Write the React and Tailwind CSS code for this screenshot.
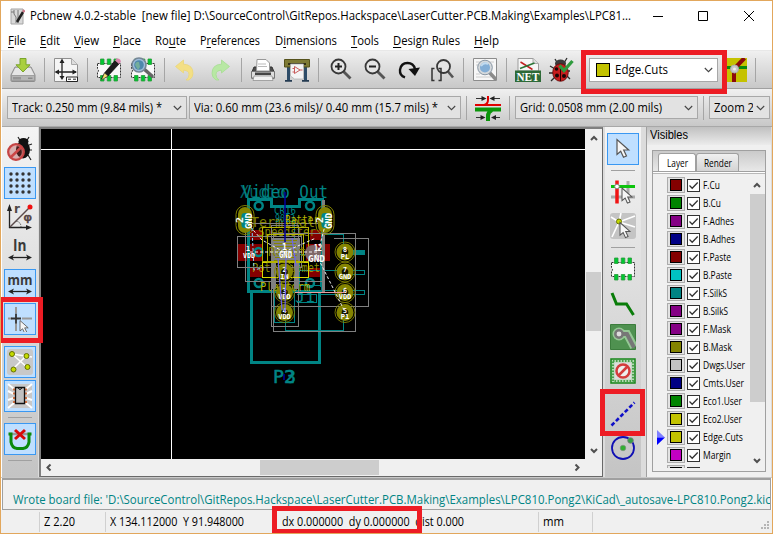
import { useLayoutEffect, useRef, useState } from "react";

/* Text squeezed or stretched horizontally to a given width. */
function Fit({ w, className = "", children }) {
  const ref = useRef(null);
  const [scale, setScale] = useState(1);
  useLayoutEffect(() => {
    setScale(w / ref.current.getBoundingClientRect().width);
  }, []);
  return (
    <span className={"block shrink-0 " + className} style={{ width: w }}>
      <span ref={ref} className="inline-block origin-left whitespace-pre" style={{ transform: `scaleX(${scale})` }}>
        {children}
      </span>
    </span>
  );
}

function Ic({ s = 26, children }) {
  return (
    <svg width={s} height={s} viewBox="0 0 26 26" className="shrink-0 block" fill="none">
      {children}
    </svg>
  );
}

const VSep = () => <div className="w-px h-6 bg-[#a5a5a5] shrink-0" />;
const HSep = () => <div className="h-px w-6 my-[3px] bg-[#a0a0a0] shrink-0" />;

function Chevron({ className = "" }) {
  return (
    <svg width="9" height="6" viewBox="0 0 9 6" className={"shrink-0 " + className} fill="none">
      <path d="M.8 1 4.5 4.7 8.2 1" stroke="#444" strokeWidth="1.1" />
    </svg>
  );
}

function Arrow({ className = "" }) {
  return (
    <svg width="8" height="7" viewBox="0 0 8 7" className={"shrink-0 " + className} fill="none">
      <path d="M1 5 4 2 7 5" stroke="#505050" strokeWidth="2" />
    </svg>
  );
}

/* ---------- top toolbar icons ---------- */
const Save = () => (
  <Ic>
    <path d="M5 10h16l4 8v5.500q0 1-1 1H2q-1 0-1-1V18z" fill="#c9c9c9" stroke="#8d8d8d" />
    <path d="M5.500 11h15l3.500 7H2z" fill="#e6e6e6" />
    <path d="M1.500 18.500h23v5h-23z" fill="#b5b5b5" stroke="#8a8a8a" strokeWidth=".6" />
    <path d="M4 20v2.500M6 20v2.500M8 20v2.500M10 20v2.500M18 21.200h4.500" stroke="#777" />
    <path d="M10 1.500h6v6.300h4L13 15 6 7.800h4z" fill="#a9cf3f" stroke="#7ba62b" />
  </Ic>
);
const PageSize = () => (
  <Ic>
    <path d="M1.500 1.500h17l6 6v17h-23z" fill="#f5f5f5" stroke="#909090" />
    <path d="M18.500 1.500v6h6" fill="#ddd" stroke="#aaa" />
    <path d="M9 3v18M3 15h20" stroke="#222" strokeWidth="1.300" />
    <path d="M9 1.500 6.500 6h5zM9 23l-2.500-4h5zM1.500 15 6 12.500v5zM24 15l-4.500-2.500v5z" fill="#222" />
    <path d="M13.500 20h11v4.500h-11z" fill="#fff" stroke="#222" />
    <path d="M15 22.200h3M20 22.200h3" stroke="#222" />
  </Ic>
);
const ChipBase = () => (
  <>
    <path d="M1.500 6.500h23v14h-23v-5q2-1.500 0-4z" fill="#f8f8f8" stroke="#333" strokeDasharray="2 1" />
    <path d="M4.500 2h3.500v5.500H4.500zM11.300 2h3.500v5.500h-3.500zM18 2h3.500v5.500H18zM4.500 18.500h3.500v5.500H4.500zM11.300 18.500h3.500v5.500h-3.500zM18 18.500h3.500v5.500H18z" fill="#00c832" stroke="#2a9a3a" strokeWidth=".8" />
  </>
);
const FpEdit = () => (
  <Ic>
    <ChipBase />
    <path d="m5.500 22 3-6L19 3.500l4 3.500L12 19z" fill="#1c1c1c" stroke="#000" strokeWidth=".6" />
    <path d="m8.500 16 3.500 3-6.500 4z" fill="#f4e06c" stroke="#333" strokeWidth=".5" />
    <path d="m19 3.500 1.800-2q4-.5 4 3.500l-1.800 2z" fill="#d884ad" />
  </Ic>
);
const FpBrowse = () => (
  <Ic>
    <ChipBase />
    <path d="m14 12 8 7" stroke="#666" strokeWidth="3.500" strokeLinecap="round" />
    <circle cx="9" cy="8" r="7" fill="#9dbcd9" stroke="#758696" strokeWidth="1.600" />
    <circle cx="9" cy="8" r="4.800" fill="#4d87ac" />
    <path d="M5 8q1-4 4-3l1 5-2 3z" fill="#73ad9c" />
  </Ic>
);
const Undo = () => (
  <Ic>
    <path d="M2.500 9.500 10.500 3v4.200q9.500.3 9.500 9.300 0 4-4 6.500h-3q3-2 3-5.500 0-4-5.500-4.300V16z" fill="#f3df85" stroke="#ead57a" strokeWidth=".8" />
  </Ic>
);
const Redo = () => (
  <Ic>
    <path d="M22.500 9.500 14.500 3v4.200Q5 7.500 5 16.500q0 4 4 6.500h3q-3-2-3-5.500 0-4 5.500-4.300V16z" fill="#b8e8a4" stroke="#a6dd92" strokeWidth=".8" />
  </Ic>
);
const Print = () => (
  <Ic>
    <path d="M4 10h18l2.500 6v5h-23v-5z" fill="#4c4c4c" stroke="#333" />
    <path d="M7 2.500h9l3.500 3.500V14h-13z" fill="#fff" stroke="#999" />
    <path d="M8 7h8M8 9.500h9" stroke="#bbb" />
    <path d="M1.500 14.500h23V21h-23z" fill="#dedede" stroke="#777" />
    <path d="M5 15.500h16v2.500H5z" fill="#444" />
    <path d="M4 19h18l1 4.500H3z" fill="#f2f2f2" stroke="#888" strokeWidth=".7" />
  </Ic>
);
const Plot = () => (
  <Ic>
    <path d="M3 8h3v16H3zM20 8h3v16h-3z" fill="#2e4c68" />
    <path d="M1 23h7v1.800H1zM18 23h7v1.800h-7z" fill="#243b52" />
    <path d="M.5 2.500h25V10h-25z" fill="#7e7a35" stroke="#55521c" />
    <path d="M4 6h18v2H4z" fill="#333016" />
    <path d="M6.500 7h13v15h-9l-4-3z" fill="#f4f4f4" stroke="#aaa" strokeWidth=".7" />
    <path d="M10.500 9.500v7l5.500-3.500zM8.500 11.500h2M8.500 15h2M16 13h2.500" stroke="#c95b5b" />
  </Ic>
);
const Mag = ({ children }) => (
  <Ic>
    <path d="m16.500 14.500 7 7" stroke="#555" strokeWidth="2.800" />
    <circle cx="11.500" cy="9.500" r="7" fill="#e4e4e4" stroke="#383838" strokeWidth="1.800" />
    {children}
  </Ic>
);
const Redraw = () => (
  <Ic>
    <path d="M10 20.300Q4.500 18.500 5 12.800 6 6 12.500 6q6 0 7.500 6" stroke="#111" strokeWidth="2.400" />
    <path d="m13.500 12 11.500-1.500L20 19z" fill="#111" />
  </Ic>
);
const ZoomFit = () => (
  <Ic>
    <path d="m19 14.500 5 6" stroke="#555" strokeWidth="2.600" />
    <circle cx="14.500" cy="9.500" r="6.500" fill="#e4e4e4" stroke="#383838" strokeWidth="1.800" />
    <path d="M5.500 11.500H3v12h2.500M9.500 11.500H12v12H9.500" stroke="#333" strokeWidth="1.500" />
  </Ic>
);
const Find = () => (
  <Ic>
    <path d="M1.500 1.500h23v22h-23z" fill="#f7f7f7" stroke="#8c8c8c" />
    <path d="M4 5h5M4 8h3M4 17h4M4 20h15M18 5h4" stroke="#ccc" />
    <path d="m17 15 6 6.500" stroke="#8b8b8b" strokeWidth="3.500" strokeLinecap="round" />
    <circle cx="13" cy="10.500" r="6.300" fill="#83aed6" stroke="#d5d9dc" strokeWidth="2.500" />
    <circle cx="13" cy="10.500" r="7.300" stroke="#758596" strokeWidth=".8" />
    <path d="M9 9q3-4 7-2" stroke="#c2dbf0" strokeWidth="2" />
  </Ic>
);
const Net = () => (
  <Ic>
    <path d="M3 1.500h15l5.500 5V14H3z" fill="#f6f6f6" stroke="#9c9c9c" />
    <path d="M18 1.500v5h5.500" fill="#ddd" stroke="#aaa" />
    <path d="m5.500 5 12 7.500" stroke="#c32121" strokeWidth="1.500" />
    <path d="M5 11.500 19.500 6" stroke="#2a7536" strokeWidth="1.500" />
    <path d="M0 13.500h26V25H0z" fill="#2d6a38" />
    <text x="1.500" y="23.500" fontFamily="Liberation Serif, serif" fontSize="11.500" fontWeight="bold" fill="#fff" textLength="23" lengthAdjust="spacingAndGlyphs">NET</text>
  </Ic>
);
const Ladybug = () => (
  <Ic>
    <path d="m6 2 3 5M18 1l-3 5M1 9l5 3M0 16h6M2 24l4-4M21 22l-3-3M21 14h-3" stroke="#2b2b2b" strokeWidth="1.300" />
    <ellipse cx="11.500" cy="6.500" rx="5.500" ry="4" fill="#3b3a3a" />
    <ellipse cx="11.500" cy="15.500" rx="7.800" ry="8.800" fill="#c71c1c" stroke="#5c0808" strokeWidth=".8" />
    <path d="M11.500 8v16" stroke="#300" />
    <g fill="#1a0505"><circle cx="7.500" cy="12" r="1.800" /><circle cx="8" cy="18.500" r="2" /><circle cx="15" cy="19" r="2" /><circle cx="14.500" cy="13" r="1.600" /></g>
    <path d="m10.500 8.500 4.500 5L23.500 4" stroke="#2f9b3e" strokeWidth="3.300" />
  </Ic>
);
const LayerPair = () => (
  <svg width="21" height="24" viewBox="0 0 21 24" className="shrink-0" fill="none">
    <path d="M0 0h21v24H0z" fill="#c5c200" />
    <path d="M0 9.500h21" stroke="#0c8a0c" strokeWidth="3" />
    <path d="M9 10 18.500 0M8 12v12" stroke="#8c0a0a" strokeWidth="4" />
    <circle cx="8.500" cy="11" r="4" fill="#c8c8c8" stroke="#aaa" />
    <circle cx="8.500" cy="11" r="1.500" fill="#eee" />
  </svg>
);
const TrackWidth = () => (
  <Ic>
    <path d="M0 10h26" stroke="#e00000" strokeWidth="2" />
    <path d="M13 1v4q0 4-4 5" stroke="#e00000" strokeWidth="2" />
    <path d="M0 14.500h26" stroke="#0a950a" strokeWidth="4" />
    <path d="M13 26v-5q0-4 4-6" stroke="#0a950a" strokeWidth="4" />
    <path d="M1 3.500h8M16 3.500h9M1 22.500h7M17 22.500h8" stroke="#333" />
    <path d="M11.500 3.500 6.500 1v5zM14.500 3.500l5-2.500v5zM10.500 22.500 5.500 20v5zM16 22.500l5-2.500v5z" fill="#222" />
  </Ic>
);

/* ---------- side toolbar icons ---------- */
const Pointer = ({ x = 0, y = 0, s = 1 }) => (
  <path transform={`translate(${x} ${y}) scale(${s})`} d="M0 0v15l3.700-3.200 2.800 6 3-1.300-2.800-6h5z" fill="#f6f6f6" stroke="#555" strokeWidth="1.200" />
);
const DrcOff = () => (
  <Ic>
    <path d="m11 1 3 5M22 1l-3 5M22 9l3-1M22 14h3M21 19l3 5" stroke="#222" strokeWidth="1.200" />
    <ellipse cx="16.500" cy="5.500" rx="5" ry="3.500" fill="#111" />
    <ellipse cx="16" cy="13.500" rx="7" ry="9" fill="#111" />
    <circle cx="9" cy="16" r="7.700" fill="#a33" fillOpacity=".35" stroke="#c44444" strokeWidth="2.500" />
    <circle cx="9" cy="16" r="6.300" stroke="#eba0a0" strokeWidth=".6" />
    <path d="m4 21 10.500-10" stroke="#cc4646" strokeWidth="2.500" />
  </Ic>
);
const Grid = () => (
  <Ic>
    {[4, 10, 16, 22].map((x) => [4, 10, 16, 22].map((y) => <circle key={x + "-" + y} cx={x} cy={y} r="1.700" fill="#333" />))}
  </Ic>
);
const Polar = () => (
  <Ic>
    <path d="M2.500 24V3M2 23.500h19" stroke="#222" strokeWidth="1.300" />
    <path d="M2.500 0 0 7h5zM25 23.500 19 21v5z" fill="#222" />
    <path d="M3 23 23 3" stroke="#5a4b4b" strokeWidth="1.500" />
    <path d="M9 17q5 1 5 6" stroke="#555" strokeDasharray="1.500 1" />
    <circle cx="23" cy="3" r="2.500" fill="#f01010" />
    <text x="7" y="9" fontFamily="DejaVu Sans" fontSize="12" fontWeight="bold" fill="#504848">r</text>
    <text x="16.500" y="17" fontFamily="DejaVu Sans" fontSize="11" fill="#504040" stroke="#504040" strokeWidth=".5" textLength="8.500" lengthAdjust="spacingAndGlyphs">φ</text>
  </Ic>
);
const Unit = ({ label, x, w, size }) => (
  <Ic>
    <text x={x} y="13" fontFamily="Open Sans, sans-serif" fontSize={size} fontWeight="bold" fill="#3a3a3a" textLength={w} lengthAdjust="spacingAndGlyphs">{label}</text>
    <path d="M4 19.500h18" stroke="#222" strokeWidth="1.300" />
    <path d="m1 19.500 6-3-1.500 3 1.500 3zM25 19.500l-6-3 1.500 3-1.500 3z" fill="#222" />
  </Ic>
);
const CursorShape = () => (
  <Ic>
    <path d="M9 1v6M9 17v8M15 12.500h10M1 12.500h4" stroke="#999" strokeWidth="2" />
    <path d="M4 12.500h10M9 7.500v10" stroke="#333" strokeWidth="1.800" />
    <Pointer x={13} y={14.500} s={0.7} />
  </Ic>
);
const Ratsnest = () => (
  <Ic>
    <rect width="26" height="26" rx="3" fill="#c8c8c8" />
    <path d="m5 5 16 14M20 6 6 20M5 5l20 3" stroke="#fff" strokeWidth="1.500" />
    <g fill="#c5dc00" stroke="#667000" strokeWidth="1"><circle cx="5" cy="5" r="2.500" /><circle cx="19.500" cy="7" r="2.500" /><circle cx="6.500" cy="20.500" r="2.500" /><circle cx="20.500" cy="18" r="2.500" /></g>
  </Ic>
);
const ModRats = () => (
  <Ic>
    <rect x="1" y="1" width="24" height="24" fill="#c8c8c8" />
    <path d="m1 1 6 5M1 8l6 3M1 17l6-2M1 25l6-5M25 1l-6 5M25 8l-6 3M25 17l-6-2M25 25l-6-5" stroke="#fff" strokeWidth="2" />
    <path d="M6 6.500h3M6 10.500h3M6 15h3M6 19h3M17 6.500h3M17 10.500h3M17 15h3M17 19h3" stroke="#d07040" strokeWidth="2" />
    <path d="M8.500 4.500h9v16h-9z" fill="#c0c0c0" stroke="#111" strokeWidth="1.300" />
    <path d="M11 4.500q2 4 4 0" stroke="#111" />
  </Ic>
);
const AutoDel = () => (
  <Ic>
    <path d="M2 8h22" stroke="#999" strokeWidth="2.500" />
    <path d="M1.500 8H4v8q1 6 6 6.500h6q5-.5 6-6.500V8h2.500" stroke="#0a8a0a" strokeWidth="3" />
    <path d="m8 4 10 9M18 4 8 13" stroke="#d80a0a" strokeWidth="3" />
  </Ic>
);
const Select = () => <Ic><Pointer x={7} y={3.500} s={1} /></Ic>;
const HighNet = () => (
  <Ic>
    <path d="M18 2v22M1 18h24" stroke="#aaa" strokeWidth="3" />
    <path d="M7 1.500v23" stroke="#f01414" strokeWidth="3.500" />
    <path d="M1 7.500h24" stroke="#0cc40c" strokeWidth="3" />
    <circle cx="7" cy="7.500" r="2.300" fill="#fff" stroke="#888" />
    <Pointer x={12} y={9} s={0.85} />
  </Ic>
);
const LocalRats = () => (
  <Ic>
    <rect width="26" height="26" rx="3" fill="#c4c4c4" />
    <path d="M9 9 1 4M9 9 25 3M9 9l16 5M9 9 2 24M9 9l2-9" stroke="#fff" strokeWidth="1.600" />
    <circle cx="9" cy="8.500" r="2.500" fill="#c5dc00" stroke="#667000" />
    <Pointer x={10} y={9.500} s={0.85} />
  </Ic>
);
const Footprint = () => <Ic><ChipBase /></Ic>;
const Track = () => <Ic><path d="m2 3 4.500 11h10L23.500 25" stroke="#0a7d0a" strokeWidth="3" /></Ic>;
const Zone = () => (
  <Ic>
    <path d="M.5.500h25v25H.5z" fill="#4f9150" stroke="#3c7d3d" />
    <path d="M9 10h8l7 13" stroke="#96c896" strokeWidth="8" />
    <circle cx="9" cy="10" r="6.500" fill="#96c896" />
    <path d="M9 10h8l7 13.500" stroke="#777" strokeWidth="4" />
    <circle cx="9" cy="10" r="3.700" fill="#ddd" stroke="#777" strokeWidth="2.500" />
  </Ic>
);
const Keepout = () => (
  <Ic>
    <path d="M1 1h24v24H1z" fill="#b4d8b4" stroke="#17851a" strokeWidth="1.500" />
    <path d="M3 3h20v20H3z" stroke="#48a04a" strokeWidth="2" strokeDasharray="1.500 1.500" />
    <path d="M4.500 4.500h17v17h-17z" fill="#ddd" />
    <circle cx="13" cy="13" r="6.500" fill="#eee" stroke="#d43c3c" strokeWidth="2.500" />
    <path d="m8.500 17.500 9-9" stroke="#d43c3c" strokeWidth="2.500" />
  </Ic>
);
const Dash = () => <Ic><path d="M1.500 24.500 24.500 1.500" stroke="#1010c8" strokeWidth="2.600" strokeDasharray="4 2.300" /></Ic>;
const CircleTool = () => (
  <Ic>
    <circle cx="13" cy="13" r="11" stroke="#1010b4" strokeWidth="1.800" />
    <circle cx="13" cy="13" r="2.800" fill="#33b033" stroke="#888" strokeWidth=".6" />
    <circle cx="20.500" cy="5.500" r="2.800" fill="#33a046" stroke="#777" strokeWidth=".8" />
  </Ic>
);

function Tool({ on, children }) {
  return (
    <div className={"w-8 h-8 shrink-0 flex items-center justify-center " + (on ? "bg-[#bfdfff] border border-[#3a98f2]" : "")}>
      {children}
    </div>
  );
}

function Combo({ className, text, w, children }) {
  return (
    <div className={"h-[23px] shrink-0 border border-[#a8a8a8] bg-[#e2e2e2] flex items-center justify-between pl-[4px] pr-[4px] overflow-hidden " + className}>
      {children || <Fit w={w}>{text}</Fit>}
      <Chevron />
    </div>
  );
}

/* ---------- board ---------- */
const T = "#008484";
const O = "#848400";
const G = "#808080";
const Y = "#b4b400";

function Label({ x, y, w, s, c, children, b, rot, o = 1 }) {
  return (
    <text x={x} y={y} fontFamily="DejaVu Sans Mono, monospace" fontSize={s} fontWeight={b ? "bold" : "normal"} fill={c} fillOpacity={o} textLength={w} lengthAdjust="spacingAndGlyphs" transform={rot ? `rotate(-90 ${x} ${y})` : undefined}>
      {children}
    </text>
  );
}

function Pad({ x, y, n, name }) {
  const w = name.length * 4.200;
  return (
    <g>
      <circle cx={x} cy={y} r="8.500" fill={O} />
      <circle cx={x} cy={y} r="10" stroke={O} strokeWidth=".9" />
      <circle cx={x} cy={y} r="3.300" fill="#151500" />
      <Label x={x - 2} y={y} w={4} s={7} c="#fff" b>{n}</Label>
      <Label x={x - w / 2} y={y + 6.500} w={w} s={7} c="#fff" b>{name}</Label>
    </g>
  );
}

function Board() {
  return (
    <svg width="544" height="330" viewBox="41 129 544 330" className="block bg-black shrink-0" fill="none">
      <path d="M41 149.500H585M171.500 129V459" stroke="#fff" />
      <g shapeRendering="crispEdges">
        <path d="M238 244h24v17h-24zM306 244h24v17h-24zM248 230h14v10h-14zM310 230h14v10h-14zM248 268h14v9h-14zM308 268h16v9h-16z" fill="#840000" />
        <path d="M248 291V199H271V206H299V199H322V291Z" stroke={T} strokeWidth="3" />
        <path d="M251 291V362.500H319V291Z" stroke={T} strokeWidth="3" />
        <path d="M350 249.500h15v5h-15z" fill={T} />
        <path d="M324 234.500h19.500v13M300 270.500h64.500v4H340M319 290.500h45.500v4H319M274.500 285v37.500h20V220M296.500 294.500h20v8h-20M285.500 318v12.500h58V320M299 285V254h21v32z" stroke={T} />
      </g>
      <g stroke={T} strokeWidth="2.500">
        <circle cx="258.700" cy="205.700" r="4" /><circle cx="310" cy="205.700" r="4" />
        <circle cx="258.700" cy="283" r="4" /><circle cx="310" cy="283" r="4" />
        <circle cx="258.500" cy="252" r="4" />
      </g>
      <Label x={251} y={227} w={64} s={14} c={O}>Terminal</Label>
      <Label x={258} y={236} w={58} s={13} c={O}>Speedster</Label>
      <Label x={252} y={272} w={68} s={13} c={Y} o={0.8}>Potentiomet</Label>
      <Label x={260} y={291} w={50} s={13} c={Y}>Platform</Label>
      <g shapeRendering="crispEdges">
        <path d="M272 238h28v24h-28z" fill={G} />
        <path d="M322 200h3v92h-3zM272 262h4v27h-4zM294 262h4v27h-4z" fill={G} />
        <path d="M237.500 236.500h64v31h-64zM333.500 238.500h35v68h-97M273.500 331.500V233.500h82v98zM271.500 326.500V225h27v101.500zM245.500 223.500h79v58h-79z" stroke={G} />
        <path d="M262 262.500h46v15h-46z" stroke="#d8d800" />
        <path d="M267 234.500h36v28h-36zM262 227h46v34h-46z" stroke={Y} />
        <path d="M273 240h24M274 243h22M273 246h24M275 257h20M274 260h24" stroke={O} />
      </g>
      <Label x={242} y={197.500} w={86} s={17} c={T}>Video Out</Label>
      <Label x={240} y={197.500} w={46} s={17} c={T} o={0.75}>Xudio</Label>
      <Label x={274} y={214} w={22} s={11} c={T}>CR16</Label>
      <Label x={275} y={222} w={20} s={10} c={T}>9013</Label>
      <Label x={295} y={302} w={20} s={13} c={T}>J1</Label>
      {[245, 325].map((x) => (
        <g key={x}>
          <rect x={x - 7} y="207" width="14" height="26" rx="7" fill={O} />
          <rect x={x - 9} y="205.500" width="18" height="29" rx="9" stroke={O} />
          <rect x={x - 3.500} y="213" width="7" height="15" rx="3" fill={T} />
          <Label x={x - 2} y={223} w={6} s={9} c="#fff" b rot>2</Label>
          <Label x={x + 6.500} y={229} w={16} s={9} c="#fff" b rot>GND</Label>
        </g>
      ))}
      <Label x={285} y={224} w={34} s={13} c={Y}>Batter</Label>
      <Label x={268} y={256} w={38} s={12} c={O}>Reset</Label>
      <circle cx="313" cy="253" r="8" fill="#806868" />
      <Pad x={284.500} y={272} n="2" name="IN" />
      <Pad x={284.500} y={292.500} n="3" name="VDD" />
      <Pad x={284.500} y={312.500} n="4" name="VDD" />
      <Pad x={345} y={252} n="8" name="PL" />
      <Pad x={345} y={272} n="7" name="GND" />
      <Pad x={345} y={292.500} n="6" name="VDD" />
      <Pad x={345} y={312.500} n="5" name="P1" />
      <path d="M285 192v50" stroke="#0000a0" strokeWidth="1.500" />
      <path d="M278 258l4 52M286 256l-1 56M292 238l4 28" stroke="#6a62f0" strokeWidth="1.200" />
      <path d="M284 252 262 240 246 222M284 252h34l8-30M316 254l29 58M284 252l32-14M250 252h34" stroke="#eee" strokeDasharray="3 2" />
      <path d="M252 228l2 42 8-2" stroke="#7fd0ff" strokeDasharray="3 2" />
      <path d="M295 292.500h50" stroke="#e8a0a0" />
      <Label x={246} y={251} w={4} s={7} c="#fff" b>1</Label>
      <Label x={243} y={258} w={12} s={7} c="#fff" b>VDD</Label>
      <Label x={282} y={250} w={5} s={8} c="#fff" b>1</Label>
      <Label x={279} y={258} w={13} s={8} c="#fff" b>GND</Label>
      <Label x={314} y={251} w={8} s={8} c="#fff" b>12</Label>
      <Label x={308} y={262} w={17} s={8.5} c="#fff" b>GND</Label>
      <g stroke={T} strokeWidth=".5">
        <Label x={273} y={382.500} w={22} s={17} c={T}>P2</Label>
        <Label x={285} y={382.500} w={11} s={17} c={T}>3</Label>
      </g>
      <path d="M284 374v6" stroke="#0000a0" strokeWidth="1.500" />
    </svg>
  );
}

const LAYERS = [
  ["F.Cu", "#840000", 17], ["B.Cu", "#008400", 18], ["F.Adhes", "#840084", 31], ["B.Adhes", "#000084", 32],
  ["F.Paste", "#840000", 28], ["B.Paste", "#00c2c2", 29], ["F.SilkS", "#008484", 24], ["B.SilkS", "#840084", 25],
  ["F.Mask", "#840084", 28], ["B.Mask", "#848400", 29], ["Dwgs.User", "#c2c2c2", 42], ["Cmts.User", "#000084", 41],
  ["Eco1.User", "#008400", 39], ["Eco2.User", "#c2c200", 39], ["Edge.Cuts", "#c2c200", 40], ["Margin", "#c200c2", 28],
];

function LayerRow({ name, color, w }) {
  return (
    <div className="h-[18px] shrink-0 flex items-center">
      <div className="w-[10px] h-4 flex items-center shrink-0">
        {name === "Edge.Cuts" && (
          <svg width="8" height="15" viewBox="0 0 8 15"><path d="M0 0v7.500h8z" fill="#8080ff" /><path d="M0 15V7.500h8z" fill="#0000ff" /></svg>
        )}
      </div>
      <div className="w-[18px] h-4 shrink-0 border border-[#acacac] bg-[#e2e2e2] flex items-center justify-center">
        <div className="w-3 h-3 border border-black" style={{ backgroundColor: color }} />
      </div>
      <div className="ml-[2px] w-[13px] h-[13px] shrink-0 border border-[#333] bg-white">
        {name && <svg width="11" height="11" viewBox="0 0 11 11" fill="none"><path d="M1.500 5.500 4.200 8.200 9.700 2.500" stroke="#333" strokeWidth="1.300" /></svg>}
      </div>
      {name && <Fit w={w} className="ml-[3px] text-[10.5px]">{name}</Fit>}
    </div>
  );
}

const MENUS = [
  [18, 14, <><u>F</u>ile</>], [20, 14, <><u>E</u>dit</>], [25, 14, <><u>V</u>iew</>], [28, 14, <><u>P</u>lace</>],
  [31, 14, <>Ro<u>u</u>te</>], [60, 15, <>P<u>r</u>eferences</>], [62, 14, <>D<u>i</u>mensions</>], [28, 14, <><u>T</u>ools</>],
  [67, 14, <><u>D</u>esign Rules</>], [25, 0, <><u>H</u>elp</>],
];

export default function App() {
  return (
    <div className="relative w-[773px] h-[534px] overflow-hidden border border-[#e2a75c] bg-white text-black flex flex-col font-['Open_Sans','Noto_Sans',sans-serif] text-[12px] leading-[16px]">
      {/* title bar */}
      <div className="h-[30px] shrink-0 flex items-center pl-[9px]">
        <svg width="15" height="17" viewBox="0 0 15 17" fill="none">
          <path d="M1 1h12v15H1z" fill="#d9d9d9" stroke="#a5a5a5" />
          <path d="M4 2v4l2 3v6M8 2v13M1 4h3" stroke="#777" />
          <path d="m7 14 6-10" stroke="#222" strokeWidth="2.500" />
          <path d="m13 4 1.500-2" stroke="#c78" strokeWidth="2.500" />
        </svg>
        <Fit w={601} className="ml-[5px]">{"Pcbnew 4.0.2-stable  [new file] D:\\SourceControl\\GitRepos.Hackspace\\LaserCutter.PCB.Making\\Examples\\LPC81..."}</Fit>
        <svg width="101" height="12" viewBox="0 0 101 12" fill="none" className="ml-[22px]" stroke="#000">
          <path d="M0 6.500h10M45.500 1.500h9v9h-9zM91 1l10 10M101 1 91 11" />
        </svg>
      </div>
      {/* menu bar */}
      <div className="h-5 shrink-0 flex items-center pl-[7px] border-b border-[#e8e8e8]">
        {MENUS.map(([w, gap, label], i) => (
          <div key={i} className="flex shrink-0 underline-offset-2">
            <Fit w={w}>{label}</Fit>
            <div className="shrink-0" style={{ width: gap }} />
          </div>
        ))}
      </div>
      {/* main toolbar */}
      <div className="h-[37px] shrink-0 ml-px flex items-center gap-2 pl-[8px] bg-linear-to-b from-[#f0f0f0] to-[#c8c8c8]">
        <Save /><VSep /><PageSize /><VSep /><FpEdit /><FpBrowse /><VSep /><Undo /><Redo /><VSep /><Print /><Plot /><VSep />
        <Mag><path d="M8 9.500h7M11.500 6v7" stroke="#222" strokeWidth="2" /></Mag>
        <Mag><path d="M8 9.500h7" stroke="#222" strokeWidth="2" /></Mag>
        <Redraw /><ZoomFit /><VSep /><Find /><VSep /><Net /><Ladybug />
        <Combo className="ml-[6px] w-[129px] h-[24px] bg-white border-[#707070]">
          <div className="flex items-center pl-[2px] gap-[5px]">
            <div className="w-[14px] h-[14px] border border-black bg-[#c2c200]" />
            <Fit w={53}>Edge.Cuts</Fit>
          </div>
        </Combo>
        <LayerPair /><VSep />
      </div>
      <div className="h-px shrink-0 ml-px bg-[#a0a0a0]" />
      {/* auxiliary toolbar */}
      <div className="h-[37px] shrink-0 ml-px flex items-center pl-[5px] bg-linear-to-b from-[#f0f0f0] to-[#c8c8c8]">
        <Combo className="w-[180px]" text="Track: 0.250 mm (9.84 mils) *" w={150} />
        <Combo className="w-[272px] ml-[2px]" text="Via: 0.60 mm (23.6 mils)/ 0.40 mm (15.7 mils) *" w={244} />
        <div className="ml-[5px] mr-[8px]"><VSep /></div>
        <TrackWidth />
        <div className="ml-[8px] mr-[5px]"><VSep /></div>
        <Combo className="w-[183px]" text="Grid: 0.0508 mm (2.00 mils)" w={142} />
        <div className="ml-[5px] mr-[5px]"><VSep /></div>
        <Combo className="w-[61px] pl-[3px]"><div className="w-[39px] overflow-hidden"><Fit w={56}>Zoom 2.20</Fit></div></Combo>
      </div>
      <div className="h-px shrink-0 ml-px bg-[#a8a8a8]" />

      <div className="h-[350px] shrink-0 ml-px flex bg-[#dcdcdc]">
        {/* left toolbar */}
        <div className="w-[36px] shrink-0 flex flex-col items-center gap-[2px] pt-[6px] bg-linear-to-b from-[#f4f4f4] to-[#c4c4c4]">
          <Tool><DrcOff /></Tool>
          <Tool on><Grid /></Tool>
          <Tool><Polar /></Tool>
          <Tool><Unit label="In" x={6} w={13.500} size={16} /></Tool>
          <Tool on><Unit label="mm" x={0.500} w={25} size={15} /></Tool>
          <Tool on><CursorShape /></Tool>
          <HSep />
          <Tool on><Ratsnest /></Tool>
          <Tool on><ModRats /></Tool>
          <HSep />
          <Tool on><AutoDel /></Tool>
          <HSep />
        </div>
        {/* drawing area */}
        <div className="ml-px w-[564px] shrink-0 border-l-2 border-t-2 border-r border-b border-l-[#808080] border-t-[#808080] border-r-[#696969] border-b-[#696969] bg-[#f0f0f0] flex flex-col">
          <div className="flex">
            <Board />
            <div className="w-[17px] flex flex-col items-center pt-[6px]">
              <Arrow />
              <div className="w-[15px] h-[59px] mt-[130px] bg-[#cdcdcd]" />
              <Arrow className="rotate-180 mt-auto mb-[5px]" />
            </div>
          </div>
          <div className="h-[17px] flex items-center pl-[4px]">
            <Arrow className="-rotate-90" />
            <div className="w-[119px] h-[15px] ml-[207px] bg-[#cdcdcd]" />
            <Arrow className="rotate-90 ml-auto mr-[21px]" />
          </div>
        </div>
        {/* right toolbar */}
        <div className="ml-[2px] w-[36px] shrink-0 flex flex-col items-center gap-[2px] pt-[6px] bg-linear-to-b from-[#f4f4f4] to-[#c4c4c4]">
          <Tool on><Select /></Tool>
          <HSep />
          <Tool><HighNet /></Tool>
          <Tool><LocalRats /></Tool>
          <HSep />
          <Tool><Footprint /></Tool>
          <Tool><Track /></Tool>
          <Tool><Zone /></Tool>
          <Tool><Keepout /></Tool>
          <HSep />
          <Tool><Dash /></Tool>
          <Tool><CircleTool /></Tool>
        </div>
        {/* layer manager */}
        <div className="ml-[5px] w-[125px] shrink-0 border-l border-[#a0a0a0] bg-[#f0f0f0] flex flex-col">
          <div className="h-[18px] shrink-0 bg-linear-to-b from-[#c0c0c0] to-[#ececec] pl-[3px] font-['Liberation_Sans',sans-serif] leading-[17px]">
            <Fit w={38}>Visibles</Fit>
          </div>
          <div className="mt-[5px] ml-[5px] w-[114px] h-[322px] border border-[#a0a0a0] flex flex-col">
            <div className="h-[21px] shrink-0 flex items-end pl-[5px] border-b border-[#a0a0a0] bg-linear-to-b from-[#cacaca] to-[#e8e8e8] text-[10.5px]">
              <div className="w-[38px] h-[18px] rounded-t-[3px] border border-b-0 border-[#a0a0a0] bg-white flex items-center justify-center"><Fit w={21}>Layer</Fit></div>
              <div className="w-[43px] h-[18px] rounded-t-[3px] border border-b-0 border-[#a0a0a0] bg-linear-to-b from-[#f0f0f0] to-[#d4d4d4] flex items-center justify-center"><Fit w={28}>Render</Fit></div>
            </div>
            <div className="h-[2px] shrink-0 bg-white border-b border-[#b8b8b8]" />
            <div className="h-[292px] mt-[2px] flex overflow-hidden">
              <div className="w-[92px] pl-[4px] flex flex-col shrink-0">
                {LAYERS.map(([n, c, w]) => <LayerRow key={n} name={n} color={c} w={w} />)}
                <LayerRow name="" color="#c2c2c2" w={0} />
              </div>
              <div className="ml-[4px] w-[16px] shrink-0 flex flex-col items-center pt-[6px]">
                <Arrow />
                <div className="w-[15px] h-[208px] mt-[5px] bg-[#cdcdcd]" />
                <Arrow className="rotate-180 mt-auto mb-[4px]" />
              </div>
            </div>
          </div>
        </div>
      </div>

      {/* message panel */}
      <div className="h-px shrink-0 bg-[#c8c8c8]" />
      <div className="h-[32px] shrink-0 ml-px mr-px border border-t-2 border-[#a0a0a0] bg-[#f0f0f0] flex items-end pb-px pl-[10px] overflow-hidden text-[#008484]">
        <Fit w={771}>{"Wrote board file: 'D:\\SourceControl\\GitRepos.Hackspace\\LaserCutter.PCB.Making\\Examples\\LPC810.Pong2\\KiCad\\_autosave-LPC810.Pong2.kicad"}</Fit>
      </div>
      {/* status bar */}
      <div className="grow flex items-center bg-[#f0f0f0]">
        <div className="ml-[38px] w-px h-5 bg-[#d0d0d0]" />
        <Fit w={31} className="ml-[4px]">Z 2.20</Fit>
        <div className="ml-[30px] w-px h-5 bg-[#d0d0d0]" />
        <Fit w={134} className="ml-[4px]">{"X 134.112000  Y 91.948000"}</Fit>
        <Fit w={182} className="ml-[38px]">{"dx 0.000000  dy 0.000000  dist 0.000"}</Fit>
        <div className="ml-[74px] w-px h-5 bg-[#d0d0d0]" />
        <Fit w={21} className="ml-[4px]">mm</Fit>
        <div className="ml-[28px] w-px h-5 bg-[#d0d0d0]" />
        <svg width="9" height="9" viewBox="0 0 9 9" className="ml-auto mr-[2px] mt-2" fill="#b5b5b5">
          <path d="M6 0h2v2H6zM3 3h2v2H3zM6 3h2v2H6zM0 6h2v2H0zM3 6h2v2H3zM6 6h2v2H6z" />
        </svg>
      </div>

      {/* highlight frames */}
      <div className="absolute left-[580px] top-[49px] w-[146px] h-[44px] border-[5px] border-[#ed1c24]" />
      <div className="absolute left-[-3px] top-[296px] w-[45px] h-[46px] border-[5px] border-[#ed1c24]" />
      <div className="absolute left-[599px] top-[388px] w-[45px] h-[47px] border-[5px] border-[#ed1c24]" />
      <div className="absolute left-[271px] top-[505px] w-[150px] h-[28px] border-[5px] border-[#ed1c24]" />
    </div>
  );
}
